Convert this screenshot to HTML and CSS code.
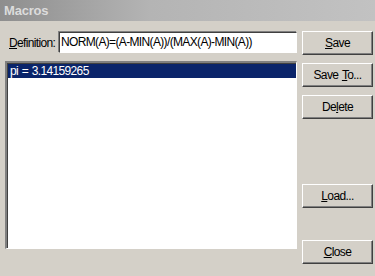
FILE: index.html
```html
<!DOCTYPE html>
<html lang="en">
<head>
    <meta charset="UTF-8">
    <title>Macros</title>
    <link rel="stylesheet" href="styles.css">
</head>
<body>
    <div class="window">
        <div class="title-bar">Macros</div>
        <div class="dialog">
            <div class="left">
                <div class="def-row">
                    <label for="def"><u>D</u>efinition:</label>
                    <div class="field">NORM(A)=(A-MIN(A))/(MAX(A)-MIN(A))</div>
                </div>
                <div class="list">
                    <div class="item selected">pi = 3.14159265</div>
                </div>
            </div>
            <div class="buttons">
                <button class="btn btn-save"><u>S</u>ave</button>
                <button class="btn btn-saveto">Save <u>T</u>o...</button>
                <button class="btn btn-delete">De<u>l</u>ete</button>
                <button class="btn btn-load"><u>L</u>oad...</button>
                <button class="btn btn-close"><u>C</u>lose</button>
            </div>
        </div>
    </div>
</body>
</html>
```

FILE: styles.css
```css
* {
    margin: 0;
    padding: 0;
    box-sizing: border-box;
}

body {
    background: #d4d0c8;
    font-family: 'Liberation Sans', Arial, sans-serif;
    font-size: 12px;
    letter-spacing: -0.65px;
    word-spacing: 1px;
    color: #000;
    width: 375px;
    height: 276px;
    overflow: hidden;
}

.title-bar {
    height: 21px;
    background: linear-gradient(90deg, #8e8e8e, #b4b4b4 40%, #c2c2c2);
    color: #dcdcdc;
    font-weight: bold;
    font-size: 13px;
    letter-spacing: -0.2px;
    padding: 3px 0 0 4px;
}

.dialog {
    display: flex;
    padding: 10px 2px 0 5px;
}

.left {
    width: 292px;
}

.def-row {
    display: flex;
    align-items: center;
    height: 21px;
    margin-top: 1px;
}

.def-row label {
    width: 54px;
    padding-left: 4px;
    white-space: nowrap;
}

.field {
    flex: 1;
    height: 21px;
    background: #fff;
    border-top: 1px solid #404040;
    border-left: 1px solid #404040;
    border-right: 1px solid #fff;
    border-bottom: 1px solid #fff;
    box-shadow: -1px -1px 0 #808080;
    padding: 2px 0 0 1px;
    white-space: nowrap;
    overflow: hidden;
}

.list {
    margin-top: 8px;
    height: 188px;
    background: #fff;
    border-top: 2px solid #808080;
    border-left: 2px solid #808080;
    border-right: 1px solid #fff;
    border-bottom: 1px solid #fff;
    box-shadow: inset 1px 1px 0 #404040;
    padding: 1px 0 0 1px;
}

.item {
    height: 14px;
    line-height: 14px;
    padding-left: 2px;
}

.item.selected {
    background: #0a246a;
    color: #fff;
}

.buttons {
    margin-left: 5px;
    display: flex;
    flex-direction: column;
    width: 71px;
}

.btn {
    height: 24px;
    font-family: inherit;
    font-size: 12px;
    letter-spacing: -0.6px;
    word-spacing: 1px;
    background: #d4d0c8;
    border-top: 1px solid #fff;
    border-left: 1px solid #fff;
    border-right: 1px solid #404040;
    border-bottom: 1px solid #404040;
    box-shadow: inset -1px -1px 0 #808080;
    color: #000;
}

.btn-saveto {
    margin-top: 8px;
}

.btn-delete {
    margin-top: 8px;
}

.btn-load {
    margin-top: 65px;
}

.btn-close {
    margin-top: 32px;
}
```
